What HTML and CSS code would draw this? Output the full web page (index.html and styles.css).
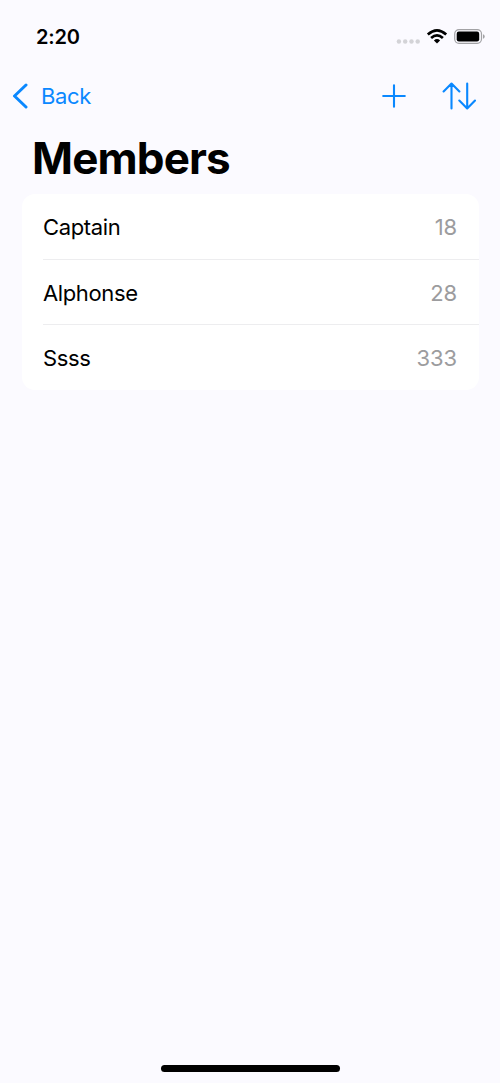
FILE: index.html
```html
<!DOCTYPE html>
<html lang="en">
<head>
<meta charset="utf-8">
<title>Members</title>
<link rel="stylesheet" href="styles.css">
</head>
<body>
<div class="screen">
  <header class="status">
    <span class="time">2:20</span>
    <svg class="status-icons" width="90" height="20" viewBox="0 0 90 20">
      <g fill="#d3d3d7"><circle cx="3.9" cy="14.5" r="2.2"/><circle cx="10.2" cy="14.5" r="2.2"/><circle cx="16.5" cy="14.5" r="2.2"/><circle cx="22.7" cy="14.5" r="2.2"/></g>
      <g fill="none" stroke="#000" stroke-width="2.7"><path d="M32.8 7.5Q42 -.7 51.2 7.5"/><path d="M36.1 11Q42 5.7 47.9 11"/></g>
      <path d="M42 16.4L38.9 13.4Q42 10.7 45.1 13.4Z"/>
      <rect x="59.7" y="2.7" width="26.8" height="13.6" rx="4.2" fill="none" stroke="#a2a2a5" stroke-width="1.2"/>
      <rect x="61.7" y="4.6" width="22.5" height="9.9" rx="2.2"/>
      <path d="M88 7.2Q89.7 7.8 89.7 9.5T88 11.8Z" fill="#a2a2a5"/>
    </svg>
  </header>
  <nav class="nav">
    <a class="back">
      <svg width="16" height="26" viewBox="0 0 16 26"><path d="M14 2L2.5 13L14 24"/></svg>
      <span class="back-label">Back</span>
    </a>
    <div class="actions">
      <svg class="thin" width="24" height="24" viewBox="0 0 24 24"><path d="M12 1.2V22.8M1.2 12H22.8"/></svg>
      <svg class="thin" width="34" height="28" viewBox="0 0 34 28"><path d="M9.5 26.5V1.8M1.6 9.5L9.5 1.6L17.4 9.5M25.2 1.5V26.2M17.3 18.5L25.2 26.4L33 18.5"/></svg>
    </div>
  </nav>
  <h1 class="title">Members</h1>
  <ul class="list">
    <li class="row"><span class="name">Captain</span><span class="value">18</span></li>
    <li class="row"><span class="name">Alphonse</span><span class="value">28</span></li>
    <li class="row"><span class="name">Ssss</span><span class="value">333</span></li>
  </ul>
  <div class="home"></div>
</div>
</body>
</html>
```
FILE: styles.css
```css
* { box-sizing: border-box; }
body { margin: 0; background: #fbfaff; font-family: Inter, "Liberation Sans", sans-serif; color: #000; }
.screen { height: 1083px; display: flex; flex-direction: column; }
.status { height: 72px; padding: 2px 15px 0 36px; display: flex; align-items: center; justify-content: space-between; }
.time { font-size: 20px; font-weight: 600; line-height: 24px; letter-spacing: -.2px; }
.status-icons { margin-top: -1px; }
.nav { height: 48px; padding: 0 24px 0 12px; display: flex; align-items: center; justify-content: space-between; }
.nav svg { fill: none; stroke: #0a88ff; stroke-linecap: round; stroke-linejoin: round; stroke-width: 3; }
.back { display: flex; align-items: center; gap: 13px; color: #0a88ff; font-size: 22px; letter-spacing: -.35px; }
.actions { display: flex; align-items: center; gap: 36px; }
.nav .thin { stroke-width: 2.1; }
.title { margin: 11px 0 8px 32px; font-size: 44px; line-height: 55px; font-weight: 700; letter-spacing: -.85px; }
.list { margin: 0 21px 0 22px; padding: 0 0 .5px 21px; list-style: none; background: #fff; border-radius: 13px; }
.row { height: 65.2px; padding-right: 22px; display: flex; align-items: center; justify-content: space-between; font-size: 22px; letter-spacing: -.37px; }
.row + .row { padding-top: 1px; border-top: 1px solid #ededef; }
.value { color: #9c9c9e; letter-spacing: -.1px; }
.home { width: 179px; height: 7px; margin: auto auto 11px 161px; border-radius: 4px; background: #000; }
```
